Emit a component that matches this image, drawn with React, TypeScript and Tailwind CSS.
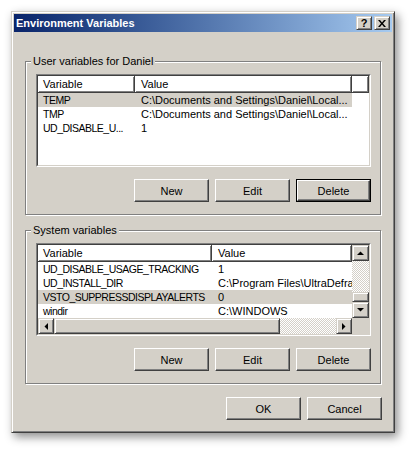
import React from 'react';

type Row = { name: string; value: string; selected?: boolean };

const USER_VARS: Row[] = [
  { name: 'TEMP', value: 'C:\\Documents and Settings\\Daniel\\Local...', selected: true },
  { name: 'TMP', value: 'C:\\Documents and Settings\\Daniel\\Local...' },
  { name: 'UD_DISABLE_U...', value: '1' },
];

const SYSTEM_VARS: Row[] = [
  { name: 'UD_DISABLE_USAGE_TRACKING', value: '1' },
  { name: 'UD_INSTALL_DIR', value: 'C:\\Program Files\\UltraDefrag' },
  { name: 'VSTO_SUPPRESSDISPLAYALERTS', value: '0', selected: true },
  { name: 'windir', value: 'C:\\WINDOWS' },
];

const sbButton =
  'border border-t-[#d4d0c8] border-l-[#d4d0c8] border-r-[#404040] border-b-[#404040] shadow-[inset_1px_1px_0_#fff,inset_-1px_-1px_0_#808080] bg-[#d4d0c8] flex items-center justify-center shrink-0';

const hatch = 'bg-[repeating-conic-gradient(#d4d0c8_0_25%,#ffffff_0_50%)] bg-[length:2px_2px]';

function Arrow({ dir }: { dir: 'up' | 'down' | 'left' | 'right' }) {
  const pts = {
    up: '0,4 7,4 3.5,0.5',
    down: '0,0 7,0 3.5,3.5',
    left: '4,0 4,7 0.5,3.5',
    right: '0,0 0,7 3.5,3.5',
  }[dir];
  const vertical = dir === 'up' || dir === 'down';
  return (
    <svg width={vertical ? 7 : 4} height={vertical ? 4 : 7} viewBox={vertical ? '0 0 7 4' : '0 0 4 7'}>
      <polygon points={pts} fill="#000" />
    </svg>
  );
}

function PushButton({ label, isDefault }: { label: string; isDefault?: boolean }) {
  if (isDefault) {
    return (
      <div className="w-[75px] h-[23px] border border-black">
        <div className="w-full h-full border border-t-white border-l-white border-r-[#404040] border-b-[#404040] shadow-[inset_-1px_-1px_0_#808080] flex items-center justify-center">
          {label}
        </div>
      </div>
    );
  }
  return (
    <div className="w-[75px] h-[23px] border border-t-white border-l-white border-r-[#404040] border-b-[#404040] shadow-[inset_-1px_-1px_0_#808080] flex items-center justify-center">
      {label}
    </div>
  );
}

function HeaderCell({ label, width, pad }: { label: string; width: number; pad: string }) {
  return (
    <div
      className={`h-[17px] shrink-0 border-r border-b border-[#404040] shadow-[inset_1px_1px_0_#fff,inset_-1px_-1px_0_#808080] flex items-center whitespace-nowrap overflow-hidden ${pad}`}
      style={{ width }}
    >
      {label}
    </div>
  );
}

function ListRows({ rows, col1, col2 }: { rows: Row[]; col1: number; col2: number }) {
  return (
    <div className="flex flex-col">
      {rows.map((r) => (
        <div key={r.name} className="flex h-[14px] items-center">
          <div
            className={`flex ${r.selected ? 'bg-[#d4d0c8]' : ''}`}
            style={{ width: col1 + col2 }}
          >
            {/* Tahoma caps run narrower than Arial's, so squeeze the name column a little */}
            <div
              className="pl-[5px] whitespace-nowrap overflow-hidden shrink-0 text-[10.5px] tracking-[-0.5px]"
              style={{ width: col1 }}
            >
              {r.name}
            </div>
            <div className="pl-[6px] whitespace-nowrap overflow-hidden shrink-0" style={{ width: col2 }}>
              {r.value}
            </div>
          </div>
        </div>
      ))}
    </div>
  );
}

function Sunken({ children }: { children: React.ReactNode }) {
  return (
    <div className="w-[335px] h-[93px] border border-t-[#808080] border-l-[#808080] border-r-white border-b-white">
      <div className="w-full h-full border border-t-[#404040] border-l-[#404040] border-r-[#d4d0c8] border-b-[#d4d0c8] bg-white overflow-hidden">
        {children}
      </div>
    </div>
  );
}

function UserList() {
  return (
    <Sunken>
      <div className="flex">
        <HeaderCell label="Variable" width={97} pad="pl-[5px]" />
        <HeaderCell label="Value" width={217} pad="pl-[6px]" />
        <HeaderCell label="" width={17} pad="" />
      </div>
      <ListRows rows={USER_VARS} col1={97} col2={217} />
    </Sunken>
  );
}

function SystemList() {
  return (
    <Sunken>
      <div className="flex h-full flex-col">
        <div className="flex flex-1 min-h-0">
          <div className="w-[314px] overflow-hidden shrink-0">
            <div className="flex">
              <HeaderCell label="Variable" width={174} pad="pl-[5px]" />
              <HeaderCell label="Value" width={140} pad="pl-[6px]" />
            </div>
            <ListRows rows={SYSTEM_VARS} col1={174} col2={140} />
          </div>
          {/* vertical scrollbar */}
          <div className="w-[17px] flex flex-col">
            <div className={`${sbButton} h-[16px]`}>
              <Arrow dir="up" />
            </div>
            <div className={`flex-1 ${hatch}`} />
            <div className={`${sbButton} h-[10px]`} />
            <div className={`${sbButton} h-[16px]`}>
              <Arrow dir="down" />
            </div>
          </div>
        </div>
        {/* horizontal scrollbar */}
        <div className="flex h-[16px] shrink-0">
          <div className={`${sbButton} w-[16px]`}>
            <Arrow dir="left" />
          </div>
          <div className={`${sbButton} w-[226px]`} />
          <div className={`flex-1 ${hatch}`} />
          <div className={`${sbButton} w-[16px]`}>
            <Arrow dir="right" />
          </div>
          <div className="w-[17px] bg-[#d4d0c8]" />
        </div>
      </div>
    </Sunken>
  );
}

function GroupBox({ title, children }: { title: string; children: React.ReactNode }) {
  return (
    <div className="relative w-[356px] h-[154px] border border-[#808080] shadow-[inset_1px_1px_0_#fff,1px_1px_0_#fff] pt-[12px] pl-[10px] pb-[12px] flex flex-col">
      <span className="absolute left-[5px] top-[-8px] px-[2px] bg-[#d4d0c8] leading-[14px]">{title}</span>
      {children}
    </div>
  );
}

export default function App() {
  return (
    <div className="min-h-screen bg-white pt-[11px] pl-[11px] font-['Liberation_Sans',Arial,sans-serif] text-[11px] leading-[14px] text-black">
      <div className="w-[384px] h-[422px] bg-[#d4d0c8] border border-t-[#d4d0c8] border-l-[#d4d0c8] border-r-[#404040] border-b-[#404040] shadow-[inset_1px_1px_0_#fff,inset_-1px_-1px_0_#808080,3px_4px_9px_rgba(0,0,0,0.45)] p-[2px] flex flex-col">
        {/* Title bar */}
        <div className="h-[18px] flex items-center bg-gradient-to-r from-[#0a246a] to-[#a6caf0] shrink-0">
          <span className="pl-[2px] text-white font-bold text-[11px]">Environment Variables</span>
          <div className="ml-auto mr-[2px] flex gap-[2px]">
            <div className={`${sbButton} w-[16px] h-[14px] font-bold text-[11px] leading-none`}>?</div>
            <div className={`${sbButton} w-[16px] h-[14px]`}>
              <svg width="8" height="7" viewBox="0 0 8 7">
                <path d="M0 0 L2 0 L4 2.5 L6 0 L8 0 L5 3.5 L8 7 L6 7 L4 4.5 L2 7 L0 7 L3 3.5 Z" fill="#000" />
              </svg>
            </div>
          </div>
        </div>

        {/* Body */}
        <div className="flex-1 flex flex-col pl-[11px] pt-[29px]">
          <GroupBox title="User variables for Daniel">
            <UserList />
            <div className="mt-[12px] flex gap-[6px] pl-[98px]">
              <PushButton label="New" />
              <PushButton label="Edit" />
              <PushButton label="Delete" isDefault />
            </div>
          </GroupBox>

          <div className="mt-[15px]">
            <GroupBox title="System variables">
              <SystemList />
              <div className="mt-[12px] flex gap-[6px] pl-[98px]">
                <PushButton label="New" />
                <PushButton label="Edit" />
                <PushButton label="Delete" />
              </div>
            </GroupBox>
          </div>

          <div className="mt-[13px] flex gap-[6px] pl-[201px]">
            <PushButton label="OK" />
            <PushButton label="Cancel" />
          </div>
        </div>
      </div>
    </div>
  );
}
